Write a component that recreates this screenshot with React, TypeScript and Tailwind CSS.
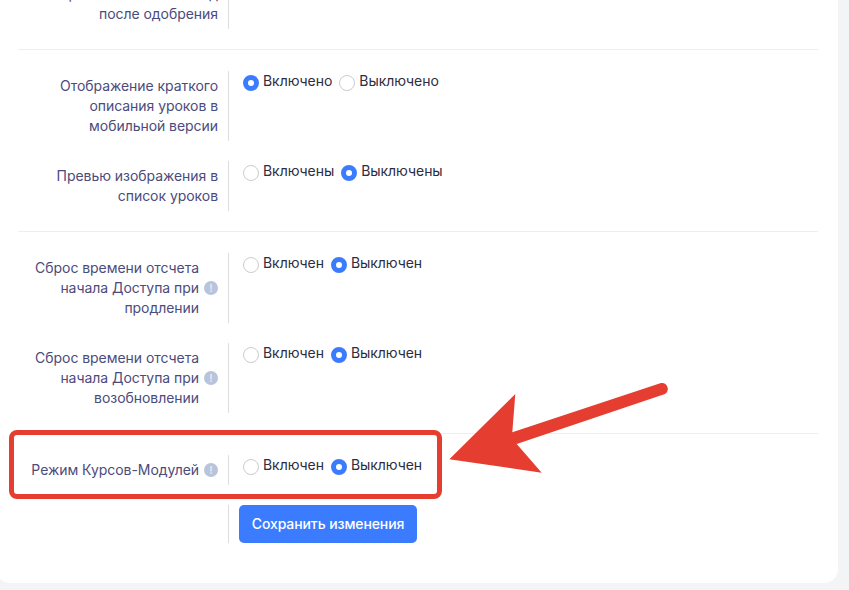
const ARROW = "449.3,459.3 515.3,394 512.3,432.3 661,383 A6,6 0 0 1 665,394 L516.7,444 541.7,472.7"

function Radio({ checked, label }: { checked?: boolean; label: string }) {
  return (
    <label className="flex items-start mr-[7px]">
      <span
        className={
          checked
            ? 'mt-[4px] w-4 h-4 rounded-full bg-white border-[5px] border-[#3b7cff]'
            : 'mt-[4px] w-4 h-4 rounded-full bg-white border border-[#cccccc]'
        }
      />
      <span className="ml-[4px] text-[14px] leading-5 tracking-[-0.05px] text-[#2d2d3f]">{label}</span>
    </label>
  )
}

function Hint() {
  return (
    <span className="shrink-0 w-[14px] h-[14px] rounded-full bg-[#b8c4dc] flex items-center justify-center text-[#e4e8f1] text-[10px] leading-none font-bold">
      !
    </span>
  )
}

function Row({ lines, hint, options, on }: { lines: string[]; hint?: boolean; options: string[]; on: number }) {
  return (
    <div className="flex">
      <div className="w-[210px] pr-[10px] py-[5px] flex justify-end items-center gap-[5px] text-right text-[14px] leading-5 tracking-[-0.05px] text-[#4b4b7c]">
        <div className="whitespace-nowrap">
          {lines.map((l) => (
            <div key={l}>{l}</div>
          ))}
        </div>
        {hint && <Hint />}
      </div>
      <div className="border-l border-[#dddddd] pl-[14px] flex items-start">
        {options.map((o, i) => (
          <Radio key={o} label={o} checked={i === on} />
        ))}
      </div>
    </div>
  )
}

export default function App() {
  return (
    <div className="relative w-[849px] h-[590px] overflow-hidden bg-[#f3f4f6] font-['Inter',sans-serif]">
      <div className="-ml-[4px] -mt-[21px] w-[842px] h-[604px] bg-white rounded-[14px] pl-[22px] pr-[20px]">
        <div className="flex flex-col">
          <Row lines={['Применить новый вход', 'после одобрения']} options={[]} on={-1} />

          <div className="mt-[20px] mb-[21px] h-px bg-[#eeeeee]" />

          <div className="flex flex-col gap-[20px]">
            <Row
              lines={['Отображение краткого', 'описания уроков в', 'мобильной версии']}
              options={['Включено', 'Выключено']}
              on={0}
            />
            <Row lines={['Превью изображения в', 'список уроков']} options={['Включены', 'Выключены']} on={1} />
          </div>

          <div className="mt-[20px] mb-[21px] h-px bg-[#eeeeee]" />

          <div className="flex flex-col gap-[20px]">
            <Row
              lines={['Сброс времени отсчета', 'начала Доступа при', 'продлении']}
              hint
              options={['Включен', 'Выключен']}
              on={1}
            />
            <Row
              lines={['Сброс времени отсчета', 'начала Доступа при', 'возобновлении']}
              hint
              options={['Включен', 'Выключен']}
              on={1}
            />
          </div>

          <div className="mt-[20px] mb-[21px] h-px bg-[#eeeeee]" />

          <Row lines={['Режим Курсов-Модулей']} hint options={['Включен', 'Выключен']} on={1} />

          <div className="flex mt-[20px]">
            <div className="w-[210px]" />
            <div className="border-l border-[#dddddd] pl-[10px]">
              <button className="w-[178px] h-[38px] pb-[1px] rounded-[5px] bg-[#3b7cff] text-white text-[14px] font-medium tracking-[-0.1px]">
                Сохранить изменения
              </button>
            </div>
          </div>
        </div>
      </div>

      {/* annotation */}
      <div className="absolute left-[9px] top-[430px] w-[433px] h-[69px] border-[5px] border-[#e53e30] rounded-[8px]" />
      <svg className="absolute left-0 top-0" width="849" height="590" viewBox="0 0 849 590">
        <path d={`M${ARROW}Z`} fill="#e53e30" />
      </svg>
    </div>
  )
}
